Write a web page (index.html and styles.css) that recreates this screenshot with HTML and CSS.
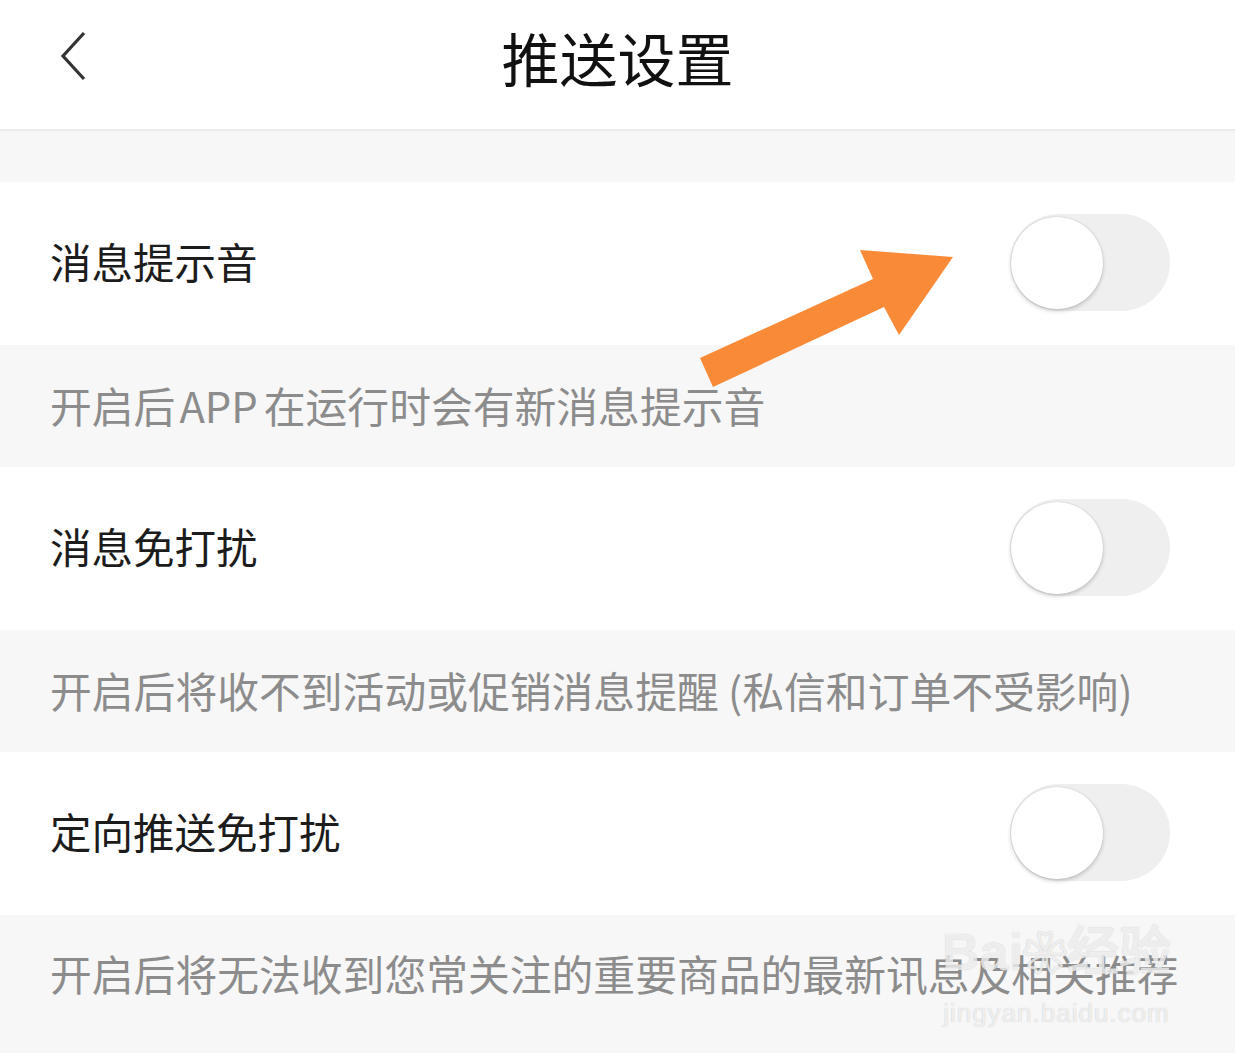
FILE: index.html
```html
<!DOCTYPE html>
<html lang="zh-CN">
<head>
<meta charset="utf-8">
<title>推送设置</title>
<link rel="stylesheet" href="styles.css">
</head>
<body>
<div class="page">
  <header class="topbar">
    <span class="back">
      <svg width="30" height="52" viewBox="0 0 30 52"><polyline points="26,3 5,26 26,49" fill="none" stroke="#333" stroke-width="3.2" stroke-linejoin="miter"/></svg>
    </span>
    <h1 class="title">推送设置</h1>
  </header>
  <div class="spacer"></div>

  <div class="row">
    <span class="label">消息提示音</span>
    <span class="switch"><span class="knob"></span></span>
  </div>
  <div class="desc">开启后<span class="latin">APP</span>在运行时会有新消息提示音</div>

  <div class="row">
    <span class="label">消息免打扰</span>
    <span class="switch"><span class="knob"></span></span>
  </div>
  <div class="desc">开启后将收不到活动或促销消息提醒 (私信和订单不受影响)</div>

  <div class="row">
    <span class="label">定向推送免打扰</span>
    <span class="switch"><span class="knob"></span></span>
  </div>
  <div class="desc last">开启后将无法收到您常关注的重要商品的最新讯息及相关推荐</div>

  <svg class="arrow" width="270" height="150" viewBox="690 245 270 150">
    <polygon points="700,358 873,279 860,250 953,257 899,335 884,307 713,387" fill="#f98b38"/>
  </svg>

  <div class="watermark">
    <div class="wm-brand">Bai<span class="paw">❀</span>经验</div>
    <div class="wm-url">jingyan.baidu.com</div>
  </div>
</div>
</body>
</html>
```

FILE: styles.css
```css
html, body {
  margin: 0;
  padding: 0;
  background: #ffffff;
}
.page {
  position: relative;
  width: 1235px;
  height: 1053px;
  overflow: hidden;
  background: #f7f7f7;
  font-family: "Noto Sans CJK SC", "Noto Sans", sans-serif;
}
.topbar {
  height: 129px;
  background: #ffffff;
  border-bottom: 2px solid #ececec;
  display: flex;
  align-items: center;
  justify-content: center;
  position: relative;
}
.back {
  position: absolute;
  left: 58px;
  top: 30px;
  display: flex;
}
.title {
  margin: 0;
  font-size: 58px;
  font-weight: 400;
  color: #111;
  line-height: 1;
  margin-top: -16px;
}
.spacer {
  height: 51px;
  background: #f7f7f7;
}
.row {
  height: 163px;
  background: #ffffff;
  display: flex;
  align-items: center;
  justify-content: space-between;
  padding: 0 65px 0 50px;
}
.label {
  font-size: 41.5px;
  color: #1c1c1c;
  line-height: 1;
  margin-top: -4px;
}
.switch {
  width: 160px;
  height: 97px;
  border-radius: 49px;
  background: #efefef;
  display: flex;
  align-items: center;
  padding-left: 1px;
  box-sizing: border-box;
  margin-top: -2px;
}
.knob {
  width: 92px;
  height: 92px;
  border-radius: 50%;
  background: #ffffff;
  box-shadow: 0 2px 4px rgba(0,0,0,0.2), 0 0 1px rgba(0,0,0,0.2);
}
.desc {
  height: 122px;
  display: flex;
  align-items: center;
  padding-left: 50px;
  font-size: 41.8px;
  color: #8c8c8c;
  line-height: 1;
  background: #f7f7f7;
  white-space: nowrap;
}
.latin {
  margin: 0 6px 0 4px;
}
.desc.last {
  height: 138px;
  align-items: flex-start;
  padding-top: 38px;
  box-sizing: border-box;
}
.arrow {
  position: absolute;
  left: 690px;
  top: 245px;
}
.watermark {
  position: absolute;
  left: 942px;
  top: 926px;
  color: rgba(255,255,255,0.75);
  text-shadow: 0 0 1px rgba(0,0,0,0.25);
  font-family: "Liberation Sans", sans-serif;
  text-align: center;
}
.wm-brand {
  font-size: 52px;
  font-weight: 700;
  line-height: 1;
}
.paw {
  font-size: 44px;
}
.wm-url {
  font-size: 26px;
  margin-top: 20px;
  letter-spacing: 1px;
}
```
